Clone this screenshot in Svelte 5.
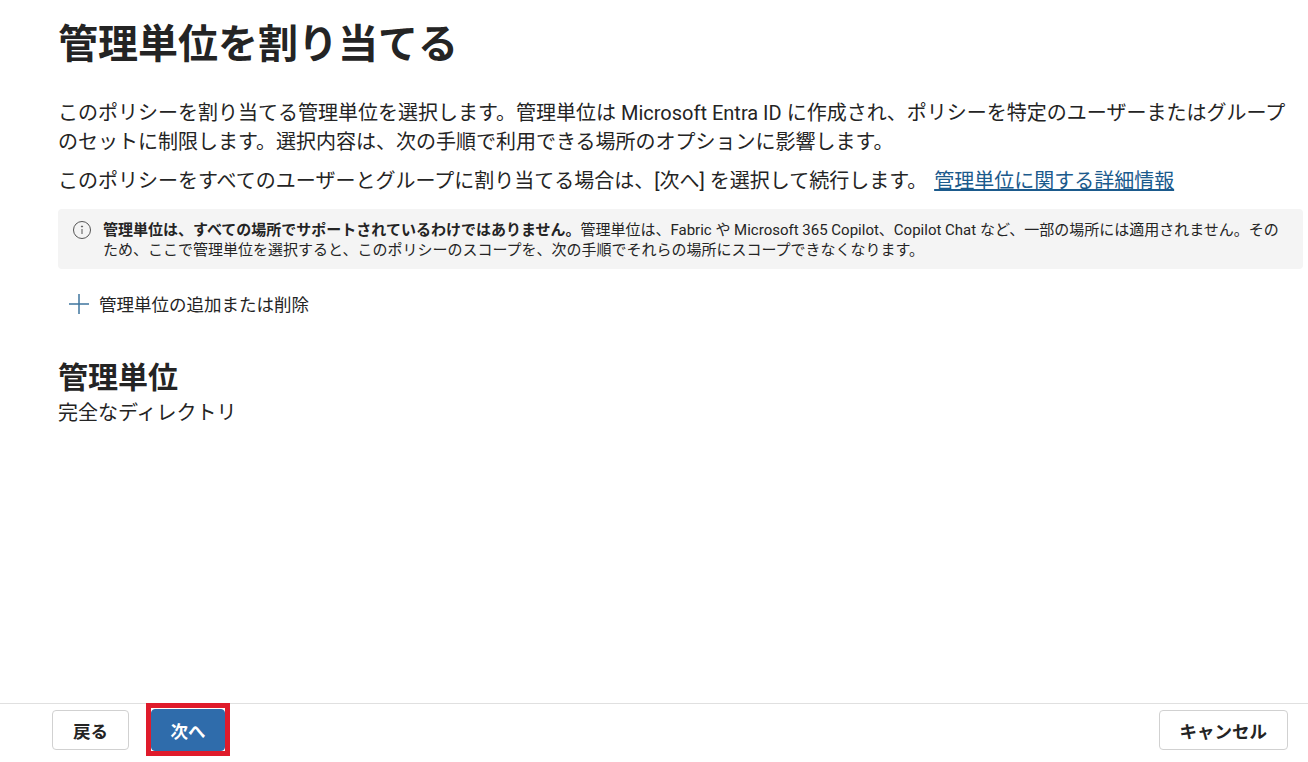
<script>
  const title = '管理単位を割り当てる';
</script>

<div class="page">
  <main>
    <h1>{title}</h1>
    <p class="desc">このポリシーを割り当てる管理単位を選択します。管理単位は Microsoft Entra ID に作成され、ポリシーを特定のユーザーまたはグループのセットに制限します。選択内容は、次の手順で利用できる場所のオプションに影響します。</p>
    <p class="desc second">このポリシーをすべてのユーザーとグループに割り当てる場合は、[次へ] を選択して続行します。 <a href="#top">管理単位に関する詳細情報</a></p>

    <div class="notice">
      <svg width="20" height="20" viewBox="0 0 20 20" fill="none" stroke="#555" stroke-width="1">
        <circle cx="10" cy="10" r="8.5" />
        <path d="M10 9v5" />
        <circle cx="10" cy="6.5" r="0.6" fill="#555" />
      </svg>
      <div class="notice-text"><b>管理単位は、すべての場所でサポートされているわけではありません。</b>管理単位は、Fabric や Microsoft 365 Copilot、Copilot Chat など、一部の場所には適用されません。そのため、ここで管理単位を選択すると、このポリシーのスコープを、次の手順でそれらの場所にスコープできなくなります。</div>
    </div>

    <button class="add">
      <svg width="22" height="22" viewBox="0 0 22 22" stroke="#3f769f" stroke-width="1.5">
        <path d="M11 1v20M1 11h20" />
      </svg>
      管理単位の追加または削除
    </button>

    <h2>管理単位</h2>
    <div class="value">完全なディレクトリ</div>
  </main>

  <footer>
    <button class="btn">戻る</button>
    <span class="highlight"><button class="btn primary">次へ</button></span>
    <button class="btn cancel">キャンセル</button>
  </footer>
</div>

<style>
  :global(body) {
    margin: 0;
    background: #fff;
  }

  .page {
    height: 762px;
    display: flex;
    flex-direction: column;
    overflow: hidden;
    font-family: Roboto, "Noto Sans CJK JP", sans-serif;
    color: #242424;
  }

  main {
    flex: 1;
    padding: 0 0 0 58px;
  }

  h1 {
    margin: 18px 0 0;
    font-size: 40px;
    line-height: 54px;
    font-weight: 700;
  }

  .desc {
    margin: 27px 20px 0 0;
    font-size: 20px;
    line-height: 29px;
  }

  .second {
    margin-top: 10px;
  }

  a {
    color: #1b5a8c;
    margin-left: 2px;
  }

  .notice {
    display: flex;
    gap: 11px;
    margin: 13px 5px 0 0;
    padding: 11px 22px 9px 14px;
    background: #f4f4f4;
    border-radius: 4px;
  }

  .notice svg {
    flex: none;
  }

  .notice-text {
    font-size: 15px;
    line-height: 20px;
  }

  .add {
    display: flex;
    align-items: center;
    gap: 9px;
    margin: 22px 0 0 10px;
    padding: 0;
    border: none;
    background: none;
    font: inherit;
    font-size: 17.5px;
    color: #242424;
  }

  h2 {
    margin: 42px 0 0;
    font-size: 30px;
    line-height: 40px;
    font-weight: 700;
  }

  .value {
    margin-top: 1px;
    font-size: 20px;
    line-height: 28px;
  }

  footer {
    box-sizing: border-box;
    height: 59px;
    border-top: 1px solid #e0e0e0;
    display: flex;
    align-items: flex-start;
    padding: 6px 20px 0 52px;
    gap: 17px;
  }

  .btn {
    height: 40px;
    padding: 0 20px;
    font: inherit;
    font-size: 17.5px;
    font-weight: 700;
    background: #fff;
    color: #242424;
    border: 1px solid #d1d1d1;
    border-radius: 4px;
  }

  .highlight {
    display: flex;
    margin-top: -7px;
    padding-top: 1px;
    background: #fff;
    border: 5px solid #df1b2b;
  }

  .primary {
    height: 42px;
    padding: 0 18.5px;
    background: #2f6cab;
    color: #fff;
    border-color: #2f6cab;
  }

  .cancel {
    margin-left: auto;
  }
</style>
